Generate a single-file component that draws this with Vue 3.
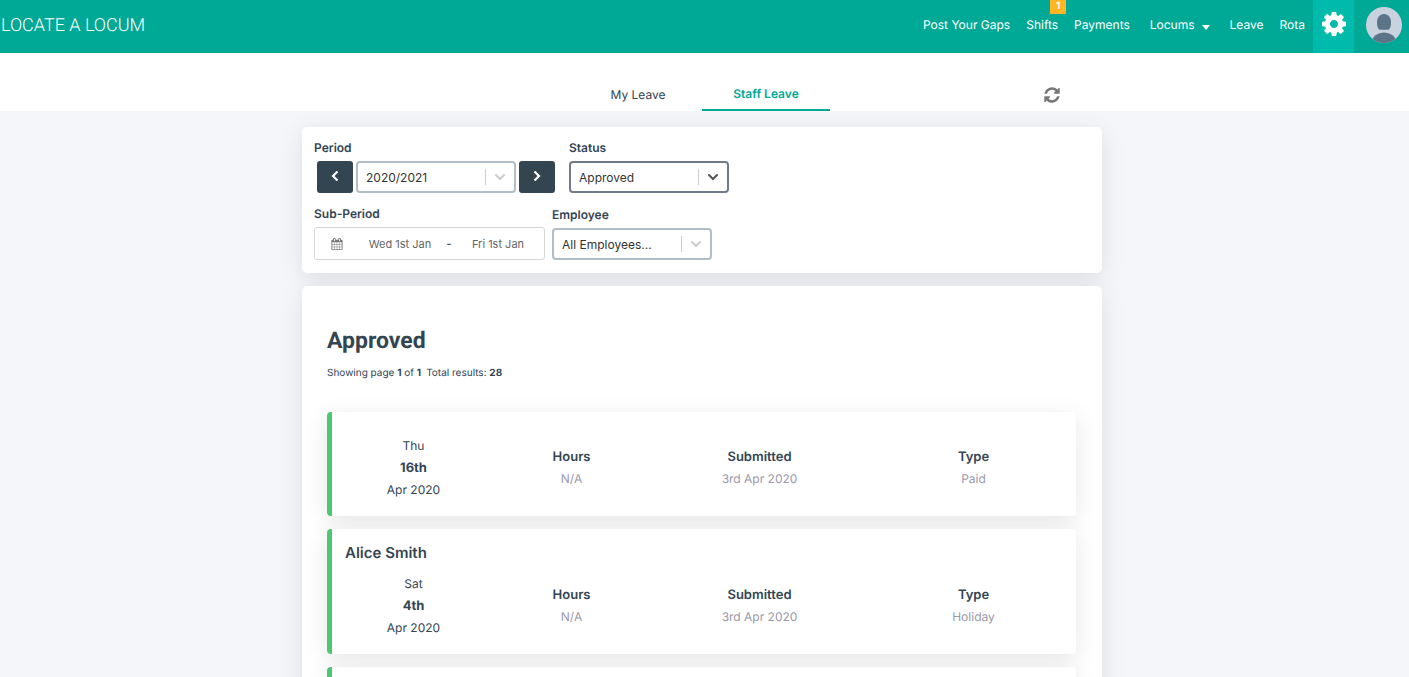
<script setup>
import { ref } from 'vue'

const period = ref('2020/2021')
const status = ref('Approved')
const employee = ref('All Employees...')
const from = ref('Wed 1st Jan')
const to = ref('Fri 1st Jan')

const leaves = [
  { name: '', day: 'Thu', date: '16th', month: 'Apr 2020', hours: 'N/A', submitted: '3rd Apr 2020', type: 'Paid' },
  { name: 'Alice Smith', day: 'Sat', date: '4th', month: 'Apr 2020', hours: 'N/A', submitted: '3rd Apr 2020', type: 'Holiday' },
  { blank: true },
]
</script>

<template>
  <div class="page">
    <header class="topbar">
      <a class="logo" href="#">LOCATE A LOCUM</a>
      <nav class="nav" aria-label="Main">
        <a href="#">Post Your Gaps</a>
        <a href="#" class="shifts">Shifts<span class="badge">1</span></a>
        <a href="#">Payments</a>
        <a href="#" class="drop">Locums
          <svg width="8" height="5" viewBox="0 0 8 5" aria-hidden="true"><path d="M0 0h8L4 5z" fill="#fff" /></svg>
        </a>
        <a href="#">Leave</a>
        <a href="#">Rota</a>
        <button class="gear" aria-label="Settings">
          <svg width="28" height="28" viewBox="0 0 1792 1792" aria-hidden="true"><path fill="#fff" d="M1152 896q0-106-75-181t-181-75-181 75-75 181 75 181 181 75 181-75 75-181zm512-109v222q0 12-8 23t-20 13l-185 28q-19 54-39 91 35 50 107 138 10 12 10 25t-9 23q-27 37-99 108t-94 71q-12 0-26-9l-138-108q-44 23-91 38-16 136-29 186-7 28-36 28h-222q-14 0-24.5-8.5t-11.5-21.5l-28-184q-49-16-90-37l-141 107q-10 9-25 9-14 0-25-11-126-114-165-168-7-10-7-23 0-12 8-23 15-21 51-66.5t54-70.5q-27-50-41-99l-183-27q-13-2-21-12.5t-8-23.5v-222q0-12 8-23t19-13l186-28q14-46 39-92-40-57-107-138-10-12-10-24 0-10 9-23 26-36 98.5-107.5t94.5-71.5q13 0 26 10l138 107q44-23 91-38 16-136 29-186 7-28 36-28h222q14 0 24.5 8.5t11.5 21.5l28 184q49 16 90 37l142-107q9-9 24-9 13 0 25 10 129 119 165 170 7 8 7 22 0 12-8 23-15 21-51 66.5t-54 70.5q26 50 41 98l183 28q13 2 21 12.5t8 23.5z" /></svg>
        </button>
        <button class="avatar" aria-label="Account">
          <svg width="36" height="36" viewBox="0 0 36 36" aria-hidden="true">
            <defs><clipPath id="disc"><circle cx="18" cy="18" r="18" /></clipPath></defs>
            <g clip-path="url(#disc)">
              <rect width="36" height="36" fill="#c9d3e0" />
              <path d="M18 7c4.600 0 7 3.600 7 8.500 0 4.500-1.200 7.300-3.500 7.300h-7c-2.300 0-3.500-2.800-3.500-7.300C11 10.600 13.400 7 18 7z" fill="#5b7488" />
              <ellipse cx="18" cy="35" rx="12" ry="9.500" fill="#5b7488" />
            </g>
          </svg>
        </button>
      </nav>
    </header>

    <div class="tabs">
      <nav class="tablist" aria-label="Leave">
        <a href="#">My Leave</a>
        <a href="#" class="active">Staff Leave</a>
      </nav>
      <button class="refresh" aria-label="Refresh">
        <svg width="18" height="18" viewBox="0 0 1792 1792" aria-hidden="true"><path fill="#777" d="M1639 1056q0 5-1 7-64 268-268 434.500t-478 166.500q-146 0-282.500-55t-243.500-157l-129 129q-19 19-45 19t-45-19-19-45v-448q0-26 19-45t45-19h448q26 0 45 19t19 45-19 45l-137 137q71 66 161 102t187 36q134 0 250-65t186-179q11-17 53-117 8-23 30-23h192q13 0 22.500 9.500t9.500 22.500zm25-800v448q0 26-19 45t-45 19h-448q-26 0-45-19t-19-45 19-45l138-138q-148-137-349-137-134 0-250 65t-186 179q-11 17-53 117-8 23-30 23h-199q-13 0-22.500-9.500t-9.500-22.500v-7q65-268 270-434.500t480-166.500q146 0 284 55.500t245 156.500l130-129q19-19 45-19t45 19 19 45z" /></svg>
      </button>
    </div>

    <main class="content">
      <form class="panel filters" @submit.prevent>
        <div class="row">
          <div class="field">
            <label for="period">Period</label>
            <div class="stepper">
              <button type="button" class="step" aria-label="Previous period">
                <svg width="8" height="12" viewBox="0 0 8 12" aria-hidden="true"><path d="M6.500 1.500L2 6l4.500 4.500" fill="none" stroke="#fff" stroke-width="2.200" /></svg>
              </button>
              <div class="select">
                <select id="period" v-model="period"><option>2020/2021</option></select>
                <svg class="chevron" width="12" height="8" viewBox="0 0 12 8" aria-hidden="true"><path d="M2 2l4 4 4-4" /></svg>
              </div>
              <button type="button" class="step" aria-label="Next period">
                <svg width="8" height="12" viewBox="0 0 8 12" aria-hidden="true"><path d="M1.500 1.500L6 6l-4.500 4.500" fill="none" stroke="#fff" stroke-width="2.200" /></svg>
              </button>
            </div>
          </div>
          <div class="field">
            <label for="status">Status</label>
            <div class="select strong">
              <select id="status" v-model="status"><option>Approved</option></select>
              <svg class="chevron" width="12" height="8" viewBox="0 0 12 8" aria-hidden="true"><path d="M2 2l4 4 4-4" /></svg>
            </div>
          </div>
        </div>
        <div class="row second">
          <div class="field">
            <label for="from">Sub-Period</label>
            <div class="range">
              <svg width="12" height="12" viewBox="64 0 1664 1792" aria-hidden="true"><path fill="#777" d="M192 1664h288v-288h-288v288zm352 0h320v-288h-320v288zm-352-352h288v-320h-288v320zm352 0h320v-320h-320v320zm-352-384h288v-288h-288v288zm736 736h320v-288h-320v288zm-384-736h320v-288h-320v288zm768 736h288v-288h-288v288zm-384-352h320v-320h-320v320zm-352-864v-288q0-13-9.500-22.500t-22.500-9.500h-64q-13 0-22.500 9.500t-9.500 22.500v288q0 13 9.500 22.500t22.500 9.500h64q13 0 22.500-9.500t9.500-22.500zm736 864h288v-320h-288v320zm-384-384h320v-288h-320v288zm384 0h288v-288h-288v288zm32-480v-288q0-13-9.500-22.500t-22.500-9.500h-64q-13 0-22.500 9.500t-9.500 22.500v288q0 13 9.500 22.500t22.500 9.500h64q13 0 22.500-9.500t9.500-22.500zm384-64v1280q0 52-38 90t-90 38h-1408q-52 0-90-38t-38-90v-1280q0-52 38-90t90-38h128v-96q0-66 47-113t113-47h64q66 0 113 47t47 113v96h384v-96q0-66 47-113t113-47h64q66 0 113 47t47 113v96h128q52 0 90 38t38 90z" /></svg>
              <input id="from" v-model="from" type="text" />
              <span class="dash">-</span>
              <input v-model="to" type="text" aria-label="Sub-Period end" />
            </div>
          </div>
          <div class="field">
            <label for="employee">Employee</label>
            <div class="select">
              <select id="employee" v-model="employee"><option>All Employees...</option></select>
              <svg class="chevron" width="12" height="8" viewBox="0 0 12 8" aria-hidden="true"><path d="M2 2l4 4 4-4" /></svg>
            </div>
          </div>
        </div>
      </form>

      <section class="panel results">
        <h1>Approved</h1>
        <p class="summary"><span>Showing page <b>1</b> of <b>1</b></span><span>Total results: <b>28</b></span></p>
        <article v-for="(leave, i) in leaves" :key="i" class="leave">
          <template v-if="!leave.blank">
            <h2 v-if="leave.name">{{ leave.name }}</h2>
            <div class="details">
              <div class="when">
                <div>{{ leave.day }}</div>
                <b>{{ leave.date }}</b>
                <div>{{ leave.month }}</div>
              </div>
              <dl><dt>Hours</dt><dd>{{ leave.hours }}</dd></dl>
              <dl><dt>Submitted</dt><dd>{{ leave.submitted }}</dd></dl>
              <dl><dt>Type</dt><dd>{{ leave.type }}</dd></dl>
            </div>
          </template>
        </article>
      </section>
    </main>
  </div>
</template>

<style>
html {
  scrollbar-width: none;
}
body {
  margin: 0;
  background: #f5f6fa;
}
</style>

<style scoped>
.page {
  font-family: Inter, "Liberation Sans", sans-serif;
  font-size: 12px;
  text-rendering: geometricPrecision;
  color: #344552;
  min-height: 100vh;
}
.page *,
.page *::before {
  box-sizing: border-box;
}
a {
  color: inherit;
  text-decoration: none;
}
button {
  border: 0;
  padding: 0;
  background: none;
  display: flex;
  align-items: center;
  justify-content: center;
  cursor: pointer;
}
svg {
  display: block;
  flex: none;
}
.topbar {
  height: 53px;
  background: #00a896;
  color: #fff;
  display: flex;
  justify-content: space-between;
}
.logo {
  font-family: Roboto, sans-serif;
  font-weight: 300;
  font-size: 18px;
  line-height: 51px;
  padding-left: 1px;
}
.nav {
  display: flex;
  line-height: 50px;
  padding-right: 7px;
}
.nav a {
  padding: 0 8px;
  position: relative;
}
.nav .drop {
  display: flex;
  align-items: center;
  gap: 7px;
  padding: 0 12px;
  height: 50px;
}
.drop svg {
  margin-top: 4px;
}
.badge {
  position: absolute;
  top: 0;
  right: 0;
  width: 16px;
  height: 14px;
  background: #ffb524;
  font-size: 10px;
  font-weight: 700;
  line-height: 12px;
  text-align: center;
}
.gear {
  width: 41px;
  background: #00baac;
  padding-bottom: 5px;
}
.avatar {
  margin-left: 12px;
  padding-bottom: 4px;
}
.tabs {
  height: 58px;
  background: #fff;
  padding-right: 5px;
  display: grid;
  grid-template-columns: 1fr auto 1fr;
  align-items: end;
}
.tablist {
  grid-column: 2;
  display: flex;
}
.tablist a {
  width: 128px;
  text-align: center;
  line-height: 33px;
}
.tablist .active {
  color: #00a896;
  font-weight: 600;
  line-height: 31px;
  border-bottom: 2px solid #00a896;
}
.refresh {
  justify-self: start;
  margin: 0 0 7px 213px;
}
.content {
  max-width: 805px;
  margin: 0 auto;
  padding: 16px 5px 0 0;
}
.panel {
  background: #fff;
  border-radius: 5px;
  box-shadow: 0 5px 25px rgba(0, 0, 0, 0.1);
}
.filters {
  padding: 11px 12px 13px;
}
.row {
  display: flex;
  align-items: flex-end;
  gap: 14px;
}
.second {
  margin-top: 11px;
  gap: 7px;
}
.field label {
  display: block;
  font-weight: 600;
  line-height: 19px;
  margin-bottom: 4px;
}
.stepper {
  display: flex;
  gap: 3px;
  padding-left: 3px;
}
.step {
  width: 36px;
  height: 32px;
  border-radius: 3px;
  background: #344552;
  padding-bottom: 2px;
}
.select {
  position: relative;
  width: 160px;
}
.select select {
  appearance: none;
  width: 100%;
  height: 32px;
  padding: 0 40px 0 8px;
  border: 2px solid #b0bec5;
  border-radius: 4px;
  background: #fff;
  color: #333;
  font: inherit;
}
.select.strong select {
  border-color: #6f7b88;
}
.select::before {
  content: "";
  position: absolute;
  right: 30px;
  top: 8px;
  bottom: 8px;
  width: 1px;
  background: #ccc;
}
.chevron {
  position: absolute;
  right: 10px;
  top: 12px;
  fill: none;
  stroke: #ccc;
  stroke-width: 2;
  stroke-linecap: round;
}
.strong .chevron {
  stroke: #555;
}
.range {
  display: flex;
  align-items: center;
  width: 231px;
  height: 33px;
  padding-left: 16px;
  border: 1px solid #d5d8da;
  border-radius: 3px;
}
.range input {
  border: 0;
  padding: 0;
  width: 74px;
  background: none;
  text-align: center;
  font: inherit;
  font-size: 11px;
  color: #666;
}
.range #from {
  margin-left: 20px;
}
.dash {
  width: 24px;
  text-align: center;
}
.results {
  margin-top: 13px;
  padding: 38px 26px 26px 25px;
}
h1 {
  font-family: Roboto, sans-serif;
  font-size: 23px;
  font-weight: 700;
  line-height: 34px;
  margin: 0;
}
.summary {
  display: flex;
  gap: 5px;
  font-size: 10px;
  line-height: 18px;
  margin: 6px 0 30px;
}
.leave {
  min-height: 104px;
  margin-bottom: 13px;
  padding: 13px 0 15px;
  background: #fff;
  border-left: 5px solid #4ec774;
  border-radius: 4px;
  box-shadow: 0 5px 25px rgba(0, 0, 0, 0.1);
}
h2 {
  font-size: 15px;
  font-weight: 600;
  line-height: 21px;
  margin: 0;
  padding-left: 13px;
}
.details {
  display: grid;
  grid-template-columns: 163fr 153fr 223fr 205fr;
  align-items: center;
  text-align: center;
  line-height: 22px;
  padding-top: 10px;
}
.when b {
  display: block;
  font-size: 13px;
}
dl,
dd {
  margin: 0;
}
dt {
  font-size: 13px;
  font-weight: 600;
}
dd {
  color: #9a99a9;
}
</style>
